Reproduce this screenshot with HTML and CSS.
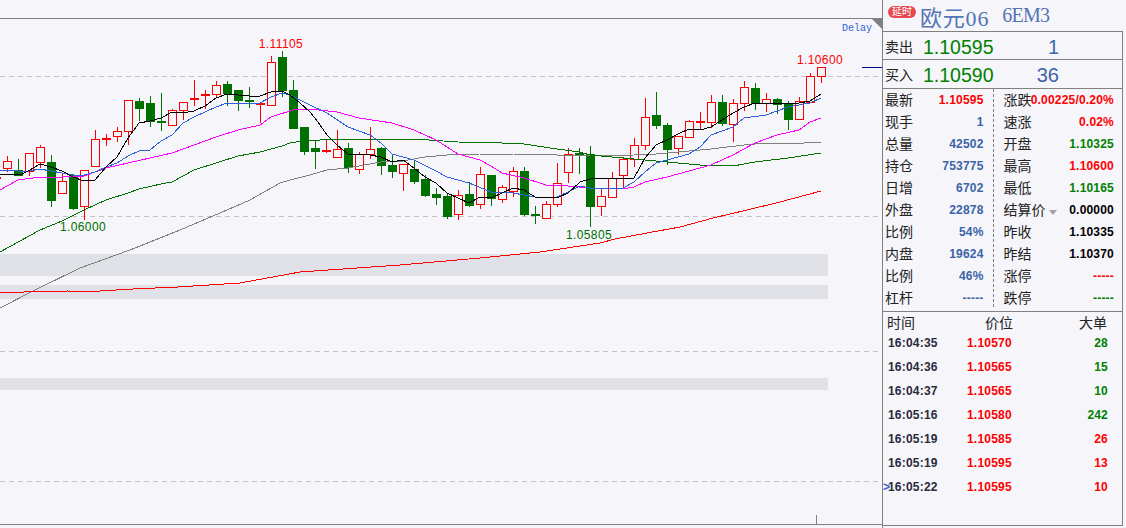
FILE: index.html
```html
<!DOCTYPE html>
<html lang="zh-CN">
<head>
  <meta charset="UTF-8">
  <title>欧元06 6EM3</title>
  <link rel="stylesheet" href="styles.css">
</head>
<body>
  <div class="app">
    <!-- K line chart, candles and averages are drawn by chart.js -->
    <div class="chart">
      <svg id="kline" class="kline" width="882" height="528" viewBox="0 0 882 528">
        <g id="grid"></g>
        <g id="candles"></g>
        <g id="averages"></g>
        <polygon class="corner" points="872,19 882,19 882,29"/>
        <line class="frame" x1="0" y1="18.5" x2="882" y2="18.5"/>
        <line class="frame" x1="0" y1="524.5" x2="882" y2="524.5"/>
        <line class="frame" x1="816.5" y1="515" x2="816.5" y2="524"/>
        <line class="last-mark" x1="862" y1="67.5" x2="882" y2="67.5"/>
        <text class="delay" x="842" y="31">Delay</text>
        <text class="peak red-text" x="281" y="48">1.11105</text>
        <text class="peak green-text" x="83" y="231">1.06000</text>
        <text class="peak green-text" x="589" y="239">1.05805</text>
        <text class="peak red-text" x="820" y="64">1.10600</text>
      </svg>
    </div>

    <div class="panel">
      <div class="title">
        <span class="badge">延时</span>
        <span class="name">欧元06</span>
        <span class="code">6EM3</span>
      </div>

      <div class="quote">
        <div class="book-row">
          <span class="label">卖出</span>
          <span class="book-price">1.10595</span>
          <span class="book-size">1</span>
        </div>
        <div class="book-row">
          <span class="label">买入</span>
          <span class="book-price">1.10590</span>
          <span class="book-size">36</span>
        </div>

        <div class="stats">
          <div class="stat-col left">
            <div class="stat"><span class="label">最新</span><b class="red">1.10595</b></div>
            <div class="stat"><span class="label">现手</span><b class="blue">1</b></div>
            <div class="stat"><span class="label">总量</span><b class="blue">42502</b></div>
            <div class="stat"><span class="label">持仓</span><b class="blue">753775</b></div>
            <div class="stat"><span class="label">日增</span><b class="blue">6702</b></div>
            <div class="stat"><span class="label">外盘</span><b class="blue">22878</b></div>
            <div class="stat"><span class="label">比例</span><b class="blue">54%</b></div>
            <div class="stat"><span class="label">内盘</span><b class="blue">19624</b></div>
            <div class="stat"><span class="label">比例</span><b class="blue">46%</b></div>
            <div class="stat"><span class="label">杠杆</span><b class="blue">-----</b></div>
          </div>
          <div class="stat-col right">
            <div class="stat"><span class="label">涨跌</span><b class="red">0.00225/0.20%</b></div>
            <div class="stat"><span class="label">速涨</span><b class="red">0.02%</b></div>
            <div class="stat"><span class="label">开盘</span><b class="green">1.10325</b></div>
            <div class="stat"><span class="label">最高</span><b class="red">1.10600</b></div>
            <div class="stat"><span class="label">最低</span><b class="green">1.10165</b></div>
            <div class="stat"><span class="label">结算价<i class="caret"></i></span><b class="black">0.00000</b></div>
            <div class="stat"><span class="label">昨收</span><b class="black">1.10335</b></div>
            <div class="stat"><span class="label">昨结</span><b class="black">1.10370</b></div>
            <div class="stat"><span class="label">涨停</span><b class="red">-----</b></div>
            <div class="stat"><span class="label">跌停</span><b class="green">-----</b></div>
          </div>
        </div>

        <div class="trades">
          <div class="trades-head">
            <span class="label head-time">时间</span>
            <span class="label">价位</span>
            <span class="label head-vol">大单</span>
          </div>
          <div class="trade"><b class="time">16:04:35</b><b class="price">1.10570</b><b class="vol green">28</b></div>
          <div class="trade"><b class="time">16:04:36</b><b class="price">1.10565</b><b class="vol green">15</b></div>
          <div class="trade"><b class="time">16:04:37</b><b class="price">1.10565</b><b class="vol green">10</b></div>
          <div class="trade"><b class="time">16:05:16</b><b class="price">1.10580</b><b class="vol green">242</b></div>
          <div class="trade"><b class="time">16:05:19</b><b class="price">1.10585</b><b class="vol red">26</b></div>
          <div class="trade"><b class="time">16:05:19</b><b class="price">1.10595</b><b class="vol red">13</b></div>
          <div class="trade current"><b class="time">16:05:22</b><b class="price">1.10595</b><b class="vol red">10</b></div>
        </div>
      </div>
    </div>
  </div>

  <script src="chart.js"></script>
</body>
</html>
```

FILE: styles.css
```css
html, body {
  margin: 0;
  height: 100%;
  overflow: hidden;
  background-color: #f5f5fa;
}
body {
  font-family: "Liberation Sans", Arial, "Noto Sans CJK SC", sans-serif;
  font-size: 12px;
}
.app {
  display: flex;
  width: 1126px;
  height: 528px;
}
.chart {
  width: 882px;
  height: 528px;
}
.kline {
  display: block;
}

/* chart pieces */
.band {
  fill: #e0e1e6;
}
.dash {
  stroke: #c4c4c8;
  stroke-width: 1;
  stroke-dasharray: 5 4;
}
.frame {
  stroke: #808080;
  stroke-width: 1;
}
.corner {
  fill: #808080;
}
.last-mark {
  stroke: #000080;
  stroke-width: 1;
}
.wick {
  stroke-width: 1;
  shape-rendering: crispEdges;
}
.wick.up {
  stroke: #ff0000;
}
.wick.down {
  stroke: #007000;
}
.body-up {
  fill: #f5f5fa;
  stroke: #ff0000;
  stroke-width: 1;
  shape-rendering: crispEdges;
}
.body-down {
  fill: #007000;
  shape-rendering: crispEdges;
}
.doji-up {
  fill: #ff0000;
  shape-rendering: crispEdges;
}
.ma {
  fill: none;
  stroke-width: 1;
  shape-rendering: crispEdges;
}
.ma-black {
  stroke: #000000;
}
.ma-blue {
  stroke: #2f62d8;
}
.ma-pink {
  stroke: #ff00ff;
}
.ma-green {
  stroke: #007000;
}
.ma-gray {
  stroke: #808080;
}
.ma-red {
  stroke: #ff0000;
}
.delay {
  font-family: "Liberation Mono", monospace;
  font-size: 10px;
  fill: #2f62d8;
}
.peak {
  font-size: 12px;
  letter-spacing: 0.4px;
  text-anchor: middle;
}
.red-text {
  fill: #ff0000;
}
.green-text {
  fill: #007000;
}

/* right panel */
.panel {
  width: 241px;
  height: 528px;
  border-left: 1px solid #808080;
}
.title {
  display: flex;
  align-items: center;
  height: 31px;
  padding-left: 5px;
  box-sizing: border-box;
}
.badge {
  width: 28px;
  height: 12px;
  margin-top: -7px;
  border-radius: 6px;
  background-color: #e8484f;
  color: #fff;
  font-size: 10px;
  line-height: 12px;
  text-align: center;
}
.name {
  margin-left: 4px;
  font-family: "Liberation Serif", "Noto Sans CJK SC", serif;
  font-size: 22px;
  letter-spacing: 0.8px;
  color: #5474b4;
  white-space: nowrap;
}
.code {
  margin-left: 13px;
  font-family: "Liberation Serif", serif;
  font-size: 20px;
  letter-spacing: -0.7px;
  color: #5474b4;
}
.quote {
  width: 240px;
  height: 495px;
  box-sizing: border-box;
  border: 1px solid #808080;
  border-left: none;
}
.label {
  margin-top: -3px;
  font-family: "Noto Sans CJK SC", sans-serif;
  font-size: 14px;
  line-height: 18px;
  color: #222;
  white-space: nowrap;
}
.book-row {
  display: flex;
  align-items: center;
  height: 28px;
  box-sizing: border-box;
  padding-left: 2px;
}
.book-row .label {
  margin-top: 0;
}
.book-row:first-child {
  border-bottom: 1px solid #808080;
}
.book-row + .book-row {
  height: 29px;
  border-bottom: 1px solid #808080;
}
.book-price {
  width: 72px;
  margin-top: 3px;
  margin-left: 10px;
  font-size: 19.5px;
  color: #008000;
}
.book-size {
  width: 64px;
  margin-top: 3px;
  font-size: 20px;
  color: #3c64a8;
  text-align: right;
}
.stats {
  display: flex;
  height: 222px;
  border-bottom: 1px solid #808080;
}
.stat-col {
  height: 218px;
}
.stat-col.left {
  width: 111px;
  padding: 0 9px 0 2px;
  box-sizing: border-box;
  border-right: 1px dashed #808080;
}
.stat-col.right {
  width: 129px;
  padding: 0 8px 0 10px;
  box-sizing: border-box;
}
.stat {
  display: flex;
  justify-content: space-between;
  align-items: center;
  height: 22px;
}
.stat b,
.trade b {
  letter-spacing: 0.2px;
  white-space: nowrap;
}
.red {
  color: #ff0000;
}
.green {
  color: #008000;
}
.blue {
  color: #3c64a8;
}
.black {
  color: #000;
}
.caret {
  display: inline-block;
  margin-left: 3px;
  border-top: 5px solid #a0a0a8;
  border-left: 4px solid transparent;
  border-right: 4px solid transparent;
}
.stat-col.right .stat:first-child .label {
  margin-right: -6px;
}
.trades {
  display: flex;
  flex-direction: column;
  gap: 6px;
}
.trades-head {
  display: flex;
  align-items: center;
  height: 22px;
  margin-bottom: -6px;
  padding: 0 15px 0 4px;
}
.head-time {
  width: 98px;
}
.head-vol {
  margin-left: auto;
}
.trade {
  position: relative;
  display: flex;
  align-items: center;
  height: 18px;
  padding: 0 14px 0 5px;
}
.time {
  width: 79px;
  color: #2b2b3b;
}
.price {
  color: #ff0000;
}
.vol {
  margin-left: auto;
}
.current::before {
  content: ">";
  position: absolute;
  left: 0;
  top: 2px;
  color: #2f62d8;
  font-weight: bold;
}
```

FILE: chart.js
```js
var NS = 'http://www.w3.org/2000/svg';

// hi, top, bottom, lo, 1 = up (red) 0 = down (green). first candle is cut by the left edge
var candles = [
  [175,177,179,182,1],
  [156,161,168,172,1],[159,170,176,176,0],[153,153,171,176,1],[145,147,162,168,1],
  [155,162,201,207,0],[173,181,193,193,1],[174,175,209,210,0],[170,170,206,220,1],
  [130,139,166,166,1],[134,138,140,146,1],[127,131,136,142,1],[100,100,131,145,1],
  [98,101,109,121,0],[96,103,122,127,0],[93,121,123,131,0],[109,110,125,125,1],
  [102,102,110,120,1],[80,98,100,106,1],[90,94,96,109,1],[81,85,94,98,1],
  [81,84,94,106,0],[90,90,101,111,0],[87,100,103,108,0],[103,103,106,123,1],
  [56,62,105,105,1],[51,57,91,97,0],[80,90,129,129,0],[127,127,152,155,0],
  [140,148,152,169,0],[139,150,152,153,1],[130,149,157,157,1],[143,148,168,173,0],
  [152,154,169,174,1],[127,149,154,159,1],[147,148,166,175,0],[155,165,172,178,0],
  [164,164,173,191,1],[160,169,182,184,0],[175,179,196,197,0],[188,194,198,205,0],
  [194,196,217,219,0],[190,195,214,220,1],[182,194,206,207,0],[167,174,204,209,1],
  [175,175,199,206,0],[185,187,199,203,1],[167,171,191,197,1],[167,171,215,216,0],
  [206,214,216,224,0],[201,204,218,218,1],[163,183,204,207,1],[148,154,172,183,1],
  [148,153,154,174,0],[146,154,207,227,0],[189,196,206,216,1],[172,178,197,198,1],
  [157,159,175,189,1],[138,145,159,167,1],[98,117,145,150,1],[92,115,126,129,0],
  [123,125,150,165,0],[136,136,148,155,1],[120,121,137,137,1],[112,121,123,130,1],
  [95,102,122,128,1],[95,102,124,126,0],[99,103,124,142,1],[81,87,103,111,1],
  [83,88,104,110,0],[93,99,103,112,1],[98,99,105,114,0],[101,103,120,130,0],
  [97,101,119,119,1],[73,76,102,103,1],[67,67,76,83,1]
];

var averages = {
  'ma-gray': '0,308 35,290 80,268 130,250 180,230 220,213 250,200 280,183 290,180 310,175 327,170 348,168 381,162 403,161 425,157 447,155 480,154 513,154 557,155 590,156 634,155 656,154 678,152 711,149 744,145 766,143 788,144 821,142',
  'ma-red': '0,292 24,292 68,291 72,292 100,291 133,289 178,287 240,283 300,272 400,265 480,258 540,252 600,243 615,239 647,233 680,227 713,218 747,210 780,202 821,191',
  'ma-green': '0,252 40,230 62,221 84,210 106,200 128,193 139,189 161,184 172,182 194,170 216,163 238,156 260,152 282,146 290,143 303,141 337,139 414,139 458,142 502,143 524,144 557,149 580,152 590,155 612,157 634,159 656,161 678,163 700,165 733,166 755,162 788,158 821,153',
  'ma-pink': '0,190 18,180 40,177 62,177 84,176 106,168 128,163 150,158 172,153 194,145 216,137 238,130 260,125 271,117 293,110 310,109 337,112 359,118 392,123 414,130 436,140 458,154 480,160 491,166 502,173 524,178 546,185 568,186 590,188 623,189 634,187 645,182 667,177 689,171 711,165 733,155 755,143 777,135 799,130 810,122 821,118',
  'ma-blue': '0,171 7,170 18,171 29,171 40,169 51,171 62,173 73,175 84,175 95,172 106,167 117,163 128,156 139,151 150,150 161,141 172,135 183,123 194,117 205,112 216,107 227,103 249,103 260,103 271,97 282,93 290,95 310,105 327,113 348,127 370,135 381,143 392,154 414,160 436,171 447,177 469,183 491,192 513,193 535,197 557,197 568,192 580,186 590,188 623,188 634,182 645,172 656,163 678,157 689,154 700,147 711,135 733,127 744,118 766,115 788,107 810,103 821,98',
  'ma-black': '0,174 20,175 30,170 40,164 51,167 62,171 73,177 84,181 95,180 106,167 117,157 128,138 139,123 150,121 161,118 172,112 183,113 194,111 205,106 216,98 227,94 249,96 260,96 271,92 282,91 290,95 300,103 310,112 318,122 327,135 337,145 348,154 370,155 381,157 392,162 403,160 414,168 425,177 436,183 447,193 458,198 469,203 480,197 491,198 502,193 513,188 524,190 535,197 557,198 568,193 580,182 590,179 601,178 634,178 645,158 656,145 667,140 678,134 689,129 700,130 711,127 722,120 733,113 744,107 755,103 777,103 799,103 810,101 821,94'
};

function add(parent, tag, attrs) {
  var el = document.createElementNS(NS, tag);
  for (var k in attrs) el.setAttribute(k, attrs[k]);
  parent.appendChild(el);
  return el;
}

function drawGrid() {
  var g = document.getElementById('grid');
  [[254, 22], [285, 14], [378, 12]].forEach(function (b) {
    add(g, 'rect', { 'class': 'band', x: 0, y: b[0], width: 828, height: b[1] });
  });
  [76, 216, 351, 481].forEach(function (y) {
    add(g, 'line', { 'class': 'dash', x1: 0, x2: 882, y1: y + 0.5, y2: y + 0.5 });
  });
}

function drawCandles() {
  var g = document.getElementById('candles');
  candles.forEach(function (c, i) {
    var x = i * 11 - 4;
    var dir = c[4] ? 'up' : 'down';
    add(g, 'line', { 'class': 'wick ' + dir, x1: x + 0.5, x2: x + 0.5, y1: c[0], y2: c[3] });
    if (c[2] - c[1] <= 3) {
      // doji, just a thick bar
      add(g, 'rect', { 'class': c[4] ? 'doji-up' : 'body-down', x: x - 4, y: c[1], width: 9, height: 2 });
    } else if (c[4]) {
      add(g, 'rect', { 'class': 'body-up', x: x - 3.5, y: c[1] + 0.5, width: 8, height: c[2] - c[1] });
    } else {
      add(g, 'rect', { 'class': 'body-down', x: x - 4, y: c[1], width: 9, height: c[2] - c[1] });
    }
  });
}

function drawAverages() {
  var g = document.getElementById('averages');
  for (var name in averages) {
    add(g, 'polyline', { 'class': 'ma ' + name, points: averages[name] });
  }
}

drawGrid();
drawCandles();
drawAverages();
```
